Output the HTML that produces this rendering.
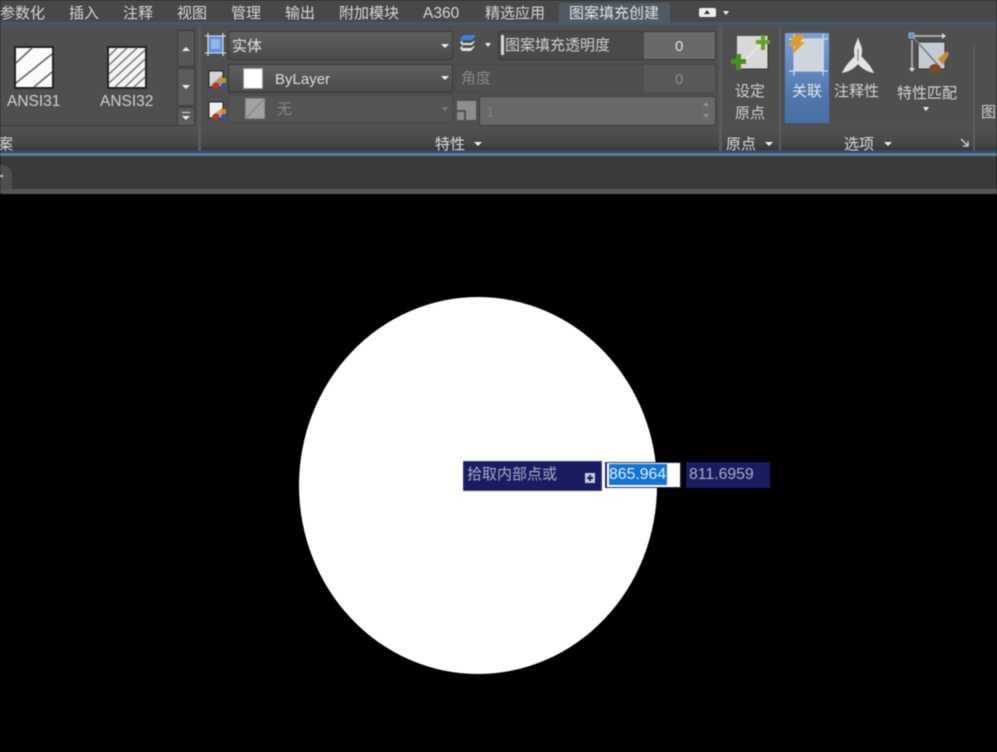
<!DOCTYPE html>
<html><head><meta charset="utf-8">
<style>
html,body{margin:0;padding:0;background:#000;width:997px;height:752px;overflow:hidden}
#w{position:relative;width:997px;height:752px;overflow:hidden;font-family:"Liberation Sans","Noto Sans CJK SC",sans-serif;filter:blur(.6px)}
.a,.t{position:absolute}
.t{white-space:nowrap;color:#d6d6d6;font-size:15px;line-height:18px;margin-top:1px}
.c{text-align:center}
.box{position:absolute;box-sizing:border-box;border:1px solid #3a3a3a;border-radius:2px}
.tri{position:absolute;width:0;height:0;border-left:4px solid transparent;border-right:4px solid transparent;border-top:4px solid #eee}
.up{position:absolute;width:0;height:0;border-left:4px solid transparent;border-right:4px solid transparent;border-bottom:4px solid #eee}
svg{position:absolute;overflow:visible}
</style></head><body><div id="w">

<!-- top tab bar -->
<div class="a" style="left:0;top:0;width:997px;height:23px;background:#484848"></div>
<div class="a" style="left:0;top:22px;width:997px;height:3px;background:#3d5a72"></div>
<div class="a" style="left:559px;top:3px;width:111px;height:21px;background:#4f5a64;border-radius:2px 2px 0 0"></div>
<div class="t" style="left:0;top:4px">参数化</div>
<div class="t" style="left:69px;top:4px">插入</div>
<div class="t" style="left:123px;top:4px">注释</div>
<div class="t" style="left:177px;top:4px">视图</div>
<div class="t" style="left:231px;top:4px">管理</div>
<div class="t" style="left:285px;top:4px">输出</div>
<div class="t" style="left:339px;top:4px">附加模块</div>
<div class="t" style="left:423px;top:4px;font-size:15.5px">A360</div>
<div class="t" style="left:485px;top:4px">精选应用</div>
<div class="t" style="left:569px;top:4px;color:#e2e2e2">图案填充创建</div>
<div class="a" style="left:699px;top:8px;width:17px;height:9px;background:#eee;border-radius:2px"></div>
<div class="up" style="left:704px;top:10px;border-bottom-color:#333;border-width:0 3px 4px 3px"></div>
<div class="tri" style="left:723px;top:11px;border-width:4px 3px 0 3px"></div>

<!-- ribbon -->
<div class="a" style="left:0;top:25px;width:997px;height:126px;background:#4f4f4f"></div>
<div class="a" style="left:0;top:127px;width:997px;height:24px;background:linear-gradient(#515151,#474747 70%,#343434)"></div>
<div class="a" style="left:0;top:150px;width:997px;height:3px;background:#2f4c68"></div>
<div class="a" style="left:0;top:153px;width:997px;height:3px;background:#5a7f98"></div>
<div class="a" style="left:0;top:156px;width:997px;height:33px;background:#3a3a3a"></div>
<div class="a" style="left:0;top:189px;width:997px;height:5px;background:#565656"></div>
<div class="a" style="left:0;top:194px;width:997px;height:558px;background:#000"></div>

<!-- panel separators -->
<div class="a" style="left:198px;top:26px;width:3px;height:125px;background:#5b5b5b"></div>
<div class="a" style="left:719px;top:26px;width:3px;height:125px;background:#5b5b5b"></div>
<div class="a" style="left:779px;top:26px;width:2px;height:125px;background:#5b5b5b"></div>
<div class="a" style="left:973px;top:44px;width:2px;height:107px;background:#5b5b5b"></div>

<!-- pattern gallery -->
<div class="a" style="left:0;top:125px;width:176px;height:1px;background:#3c3c3c"></div>
<svg style="left:14px;top:46px" width="40" height="43" viewBox="0 0 40 43">
<rect x="1" y="1" width="38" height="41" fill="#fbfbfb" stroke="#222" stroke-width="2"/>
<path d="M2 17L18 2M2 37L38 8M20 41L38 26" stroke="#666" stroke-width="1.6" fill="none"/></svg>
<svg style="left:107px;top:46px" width="40" height="43" viewBox="0 0 40 43">
<rect x="1" y="1" width="38" height="41" fill="#f4f4f4" stroke="#222" stroke-width="2"/>
<path d="M2 10L10 2M2 19L20 2M2 28L30 2M2 37L38 4M8 41L38 13M18 41L38 22M27 41L38 31" stroke="#777" stroke-width="1.5" fill="none"/></svg>
<div class="t" style="left:7px;top:92px;font-size:15.5px;color:#d0d0d0">ANSI31</div>
<div class="t" style="left:100px;top:92px;font-size:15.5px;color:#d0d0d0">ANSI32</div>
<div class="box" style="left:177px;top:30px;width:18px;height:37px;background:#575757"></div>
<div class="up" style="left:182px;top:47px"></div>
<div class="box" style="left:177px;top:68px;width:18px;height:38px;background:#5c5c5c"></div>
<div class="tri" style="left:182px;top:85px"></div>
<div class="box" style="left:177px;top:107px;width:18px;height:19px;background:#5c5c5c"></div>
<div class="a" style="left:182px;top:112px;width:8px;height:1px;background:#ddd"></div>
<div class="tri" style="left:182px;top:116px"></div>
<div class="t" style="left:-2px;top:135px;color:#dcdcdc">案</div>

<!-- properties left icons -->
<svg style="left:205px;top:33px" width="21" height="23" viewBox="0 0 21 23">
<rect x="3" y="3" width="15" height="17" fill="#5f8fd8"/><rect x="6" y="6" width="9" height="10" fill="#8fb6ea"/>
<path d="M0 3H21M0 20H21M3 0V23M18 0V23" stroke="#c9d6de" stroke-width="1.3" fill="none"/></svg>
<svg style="left:207px;top:69px" width="20" height="21" viewBox="0 0 20 21">
<rect x="2" y="2" width="14" height="16" fill="#d4d4d4" stroke="#222"/><path d="M3 17L15 6V17Z" fill="#b98a7a"/>
<circle cx="9" cy="17" r="3.5" fill="#a83a2a"/><rect x="14" y="9" width="5" height="5" fill="#d28a26"/><rect x="14" y="15" width="5" height="5" fill="#2d58a8"/></svg>
<svg style="left:207px;top:100px" width="20" height="21" viewBox="0 0 20 21">
<rect x="2" y="2" width="14" height="16" fill="#f0f0f0" stroke="#222"/><path d="M3 17L15 8V17Z" fill="#c9a090"/>
<circle cx="9" cy="17" r="3.5" fill="#a83a2a"/><rect x="14" y="9" width="5" height="5" fill="#d28a26"/><rect x="14" y="15" width="5" height="5" fill="#2d58a8"/></svg>

<!-- dropdowns -->
<div class="box" style="left:228px;top:31px;width:225px;height:29px;background:linear-gradient(#5f5f5f,#4a4a4a)"></div>
<div class="t" style="left:232px;top:37px;color:#e4e4e4">实体</div>
<div class="tri" style="left:441px;top:44px"></div>
<div class="box" style="left:228px;top:64px;width:225px;height:29px;background:linear-gradient(#5f5f5f,#4a4a4a)"></div>
<div class="a" style="left:243px;top:68px;width:20px;height:21px;background:#fff;border:1px solid #999;box-sizing:border-box"></div>
<div class="t" style="left:275px;top:70px;color:#dcdcdc">ByLayer</div>
<div class="tri" style="left:441px;top:76px"></div>
<div class="box" style="left:228px;top:95px;width:225px;height:28px;background:#545454;border-color:#494949"></div>
<svg style="left:245px;top:98px" width="20" height="21" viewBox="0 0 20 21"><rect x=".5" y=".5" width="19" height="20" fill="#a2a2a2" stroke="#8a8a8a"/><path d="M1 20L19 1" stroke="#848484" stroke-width="1.2"/></svg>
<div class="t" style="left:277px;top:100px;color:#858585">无</div>
<div class="tri" style="left:441px;top:107px;border-top-color:#777"></div>

<!-- transparency -->
<svg style="left:459px;top:34px" width="18" height="21" viewBox="0 0 18 21">
<path d="M1 5L5 1H17L13 6H3Z" fill="#3f7fd8"/><path d="M1 8L3 7H4L3 9H12L15 7H16L13 11H3Z" fill="#d8e4ea"/><path d="M1 14L3 12H4L3 14H12L15 12H16L12 17H3Z" fill="#e4e4e4"/></svg>
<div class="tri" style="left:485px;top:43px;border-width:4px 3px 0 3px"></div>
<div class="box" style="left:498px;top:31px;width:218px;height:29px;background:#4a4a4a"></div>
<div class="a" style="left:644px;top:32px;width:71px;height:27px;background:#696969"></div>
<div class="a" style="left:501px;top:35px;width:3px;height:20px;background:#d8d8d8"></div>
<div class="t" style="left:505px;top:36px;color:#cfcfcf">图案填充透明度</div>
<div class="t" style="left:675px;top:37px;color:#e2e2e2">0</div>

<div class="box" style="left:455px;top:64px;width:261px;height:29px;background:#4f4f4f;border-color:#474747"></div>
<div class="a" style="left:644px;top:65px;width:71px;height:27px;background:#595959"></div>
<div class="t" style="left:461px;top:69px;color:#868686">角度</div>
<div class="t" style="left:675px;top:70px;color:#8c8c8c">0</div>

<svg style="left:457px;top:101px" width="19" height="19" viewBox="0 0 19 19"><path d="M0 0H19V19H9V9H0Z" fill="#8d8d8d"/><rect y="11" width="7" height="8" fill="#8d8d8d"/></svg>
<div class="box" style="left:479px;top:96px;width:237px;height:30px;background:#686868;border-color:#3f3f3f"></div>
<div class="t" style="left:486px;top:103px;color:#7d7d7d">1</div>
<div class="up" style="left:703px;top:102px;border-width:0 3px 4px 3px;border-bottom-color:#929292"></div>
<div class="tri" style="left:703px;top:114px;border-width:4px 3px 0 3px;border-top-color:#929292"></div>

<div class="t" style="left:435px;top:135px;color:#dcdcdc">特性</div>
<div class="tri" style="left:474px;top:142px"></div>

<!-- origin -->
<svg style="left:729px;top:35px" width="44" height="42" viewBox="0 0 44 42">
<rect x="8" y="1" width="31" height="33" fill="#d8d8d8"/><path d="M10 34H39V2" stroke="#333" fill="none"/>
<path d="M9 32L31 10" stroke="#f2f2f2" stroke-width="1.2"/>
<path d="M27 5H32V0H36V5H41V9H36V15H32V9H27Z" fill="#5ea32a"/>
<path d="M2 24H7V19H12V24H17V29H12V35H7V29H2Z" fill="#4d8e22"/></svg>
<div class="t c" style="left:725px;top:80px;width:50px;color:#d0d0d0;line-height:22px;white-space:normal">设定<br>原点</div>
<div class="t" style="left:726px;top:135px;color:#dcdcdc">原点</div>
<div class="tri" style="left:765px;top:142px"></div>

<!-- options -->
<div class="a" style="left:784px;top:32px;width:46px;height:92px;box-sizing:border-box;background:linear-gradient(#7da2d0,#4f77ad 70%,#4a70a4);border:1px solid #3f5675;border-radius:2px"></div>
<svg style="left:786px;top:34px" width="42" height="42" viewBox="0 0 42 42">
<rect x="8" y="5" width="30" height="32" fill="#cfd5dc"/>
<path d="M8 0V42M37 0V42M3 5H42M3 37H42" stroke="#c8dcee" stroke-width="1.2" fill="none"/>
<path d="M9 1H19L14 8H19L6 21L9 12H2Z" fill="#e29a2b"/></svg>
<div class="t" style="left:792px;top:82px;color:#e6e6e6">关联</div>
<svg style="left:841px;top:37px" width="34" height="37" viewBox="0 0 34 37">
<path d="M17 0C18 5 21 9 21 13C21 17 20 19 21 20C25 24 30 29 33 36C27 35 21 32 17 27C13 32 7 35 1 36C4 29 9 24 13 20C14 19 13 17 13 13C13 9 16 5 17 0Z" fill="#e4e4e4"/>
<path d="M17 12V24" stroke="#888" stroke-width="1.2"/></svg>
<div class="t" style="left:834px;top:82px;color:#d4d4d4">注释性</div>
<svg style="left:908px;top:32px" width="44" height="44" viewBox="0 0 44 44">
<rect x="10" y="10" width="27" height="27" fill="#c4ccd2" stroke="#333"/>
<path d="M4 8V36M6 4H34" stroke="#c4c4c4" stroke-width="1.4"/>
<path d="M1 36H7L4 40ZM34 1V7L38 4Z" fill="#dcdcdc"/>
<path d="M4 4L30 33" stroke="#7d7d7d" stroke-width="1.5"/>
<rect x="1" y="1" width="5" height="5" fill="#5a8fd8" stroke="#ddd" stroke-width=".6"/>
<path d="M30 27L39 19L41 22L35 33Z" fill="#c88a3a"/>
<ellipse cx="27" cy="37" rx="6" ry="5" fill="#7a4a2a"/></svg>
<div class="t" style="left:897px;top:84px;color:#d4d4d4">特性匹配</div>
<div class="tri" style="left:923px;top:107px;border-width:4px 3px 0 3px"></div>
<div class="t" style="left:844px;top:135px;color:#dcdcdc">选项</div>
<div class="tri" style="left:884px;top:142px"></div>
<svg style="left:961px;top:139px" width="8" height="8" viewBox="0 0 8 8"><path d="M0 0L6 6M7 2V7H2" stroke="#d8d8d8" stroke-width="1.3" fill="none"/></svg>
<div class="t" style="left:981px;top:103px;color:#cfcfcf">图</div>

<!-- doc tab -->
<div class="a" style="left:-14px;top:165px;width:26px;height:24px;background:#4e4e4e;border-radius:0 10px 0 0"></div>
<div class="a" style="left:0;top:175px;width:3px;height:2px;background:#cfcfcf"></div>

<!-- circle -->
<div class="a" style="left:299px;top:297px;width:358px;height:377px;border-radius:50%;background:#fff"></div>

<!-- dynamic input -->
<div class="a" style="left:463px;top:461px;width:139px;height:30px;background:#1a1c62;box-sizing:border-box;border:1px solid #3a3d78"></div>
<div class="t" style="left:467px;top:465px;color:#a9abc6">拾取内部点或</div>
<div class="a" style="left:585px;top:473px;width:10px;height:10px;background:#c9cbd6"></div>
<div class="a" style="left:587px;top:477px;width:6px;height:2px;background:#1a1c62"></div>
<div class="a" style="left:589px;top:475px;width:2px;height:6px;background:#1a1c62"></div>
<div class="a" style="left:605px;top:462px;width:76px;height:26px;background:#fff;box-sizing:border-box;border:1px solid #25285f;border-left:2px solid #25285f"></div>
<div class="a" style="left:609px;top:464px;width:58px;height:21px;background:#1272d8"></div>
<div class="t" style="left:609px;top:465px;color:#e6f0fb;font-size:15.8px">865.964</div>
<div class="a" style="left:686px;top:462px;width:84px;height:26px;background:#1a1c62"></div>
<div class="t" style="left:689px;top:465px;color:#a9abc6;font-size:15.8px">811.6959</div>

</div></body></html>
